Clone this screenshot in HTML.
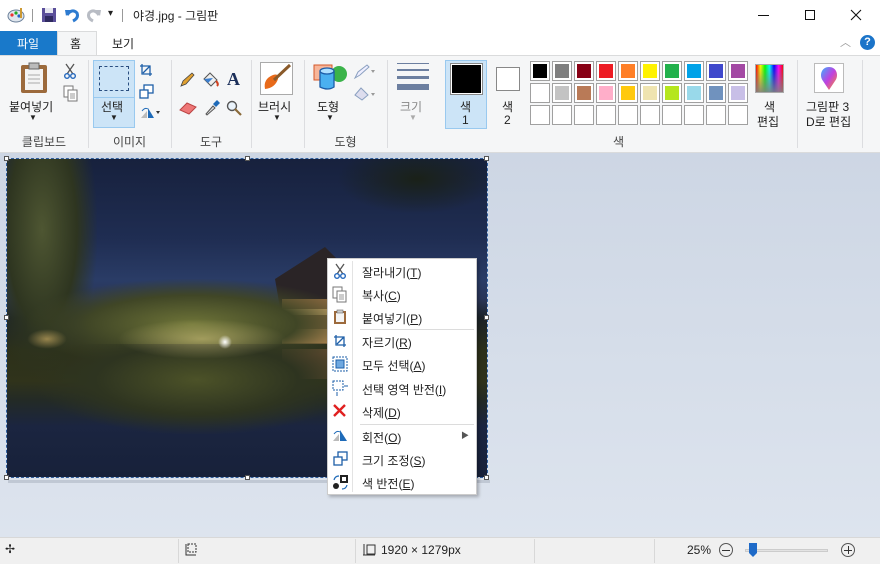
<!DOCTYPE html>
<html><head><meta charset="utf-8"><style>
*{margin:0;padding:0;box-sizing:border-box}
body{width:880px;height:564px;overflow:hidden;font-family:"Liberation Sans","Noto Sans CJK KR",sans-serif;font-size:12px;color:#222;background:#fff;position:relative}
.a{position:absolute}
.t{position:absolute;white-space:nowrap}
.sep{position:absolute;top:60px;width:1px;height:88px;background:#dcdde0}
.glab{position:absolute;top:133px;font-size:12px;color:#444;text-align:center}
.cell{position:absolute;width:20px;height:20px;border:1px solid #a0a0a0;background:#fff}
.cell i{position:absolute;left:2px;top:2px;width:14px;height:14px;display:block}
.mi{position:absolute;left:362px;font-size:12px;color:#222}
.ms{position:absolute;left:360px;width:114px;height:1px;background:#dcdcdc}
.h{position:absolute;width:5px;height:5px;background:#fff;border:1px solid #555}
</style></head><body>
<div class="a" style="left:0;top:0;width:880px;height:31px;background:#fff"></div>
<svg class="a" style="left:7px;top:7px" width="18" height="16"><ellipse cx="9" cy="9" rx="8" ry="6" fill="#dfe6ee" stroke="#6a7f99"/><circle cx="5" cy="8" r="1.6" fill="#e33"/><circle cx="9" cy="6" r="1.6" fill="#2a2"/><circle cx="12" cy="9" r="1.6" fill="#26c"/><rect x="13" y="1" width="2" height="10" fill="#c93"/></svg>
<div class="a" style="left:32px;top:9px;width:1px;height:13px;background:#999"></div>
<svg class="a" style="left:41px;top:7px" width="16" height="16"><rect x="1" y="1" width="14" height="14" fill="#5b4f9a"/><rect x="4" y="1" width="8" height="5" fill="#e6e6f0"/><rect x="4" y="9" width="8" height="6" fill="#2f2a60"/></svg>
<svg class="a" style="left:64px;top:7px" width="16" height="16"><path d="M3 8 Q8 1 13 6 Q15 11 9 14" fill="none" stroke="#2d7bd0" stroke-width="3"/><path d="M1 3 L7 3 L2 9Z" fill="#2d7bd0"/></svg>
<svg class="a" style="left:86px;top:7px" width="16" height="16"><path d="M13 8 Q8 1 3 6 Q1 11 7 14" fill="none" stroke="#b8bcc4" stroke-width="3"/><path d="M15 3 L9 3 L14 9Z" fill="#b8bcc4"/></svg>
<div class="t" style="left:108px;top:8px;font-size:10px">▾</div>
<div class="a" style="left:122px;top:9px;width:1px;height:13px;background:#999"></div>
<div class="t" style="left:133px;top:7px;font-size:12px">야경.jpg - 그림판</div>
<div class="a" style="left:758px;top:15px;width:11px;height:1px;background:#111"></div>
<div class="a" style="left:805px;top:10px;width:10px;height:10px;border:1px solid #111"></div>
<svg class="a" style="left:850px;top:9px" width="12" height="12"><path d="M1 1L11 11M11 1L1 11" stroke="#111" stroke-width="1.1"/></svg>
<div class="a" style="left:0;top:31px;width:57px;height:24px;background:#1979ca"></div>
<div class="t" style="left:17px;top:35px;color:#fff;font-size:12px">파일</div>
<div class="a" style="left:57px;top:31px;width:40px;height:25px;background:#f5f6f7;border:1px solid #dadbdc;border-bottom:none"></div>
<div class="t" style="left:70px;top:35px">홈</div>
<div class="t" style="left:112px;top:35px">보기</div>
<div class="t" style="left:840px;top:34px;color:#999;font-size:11px">︿</div>
<div class="a" style="left:860px;top:35px;width:15px;height:15px;border-radius:50%;background:#1b74c9;color:#fff;font-size:11px;font-weight:bold;text-align:center;line-height:15px">?</div>
<div class="a" style="left:0;top:55px;width:880px;height:98px;background:#f5f6f7;border-top:1px solid #dadbdc;border-bottom:1px solid #dadbdc"></div>
<div class="sep" style="left:88px"></div><div class="sep" style="left:171px"></div><div class="sep" style="left:251px"></div><div class="sep" style="left:304px"></div><div class="sep" style="left:387px"></div><div class="sep" style="left:797px"></div><div class="sep" style="left:862px"></div>
<svg class="a" style="left:20px;top:62px" width="28" height="32"><rect x="1" y="3" width="26" height="28" rx="2" fill="#9c6a3c"/><rect x="5" y="7" width="18" height="21" fill="#f4f4f4"/><rect x="9" y="1" width="10" height="6" fill="#bbb" stroke="#666"/><path d="M8 13h12M8 17h12M8 21h12" stroke="#aaa"/></svg>
<svg class="a" style="left:63px;top:63px" width="14" height="16"><path d="M3 1L10 11M11 1L4 11" stroke="#555" stroke-width="1.3"/><circle cx="4" cy="13" r="2.3" fill="none" stroke="#2266bb" stroke-width="1.4"/><circle cx="10" cy="13" r="2.3" fill="none" stroke="#2266bb" stroke-width="1.4"/></svg>
<svg class="a" style="left:63px;top:85px" width="16" height="17"><rect x="1" y="1" width="9" height="11" fill="#fff" stroke="#777"/><rect x="5" y="5" width="9" height="11" fill="#fff" stroke="#777"/><path d="M7 9h5M7 11h5M7 13h5" stroke="#999"/></svg>
<div class="t" style="left:9px;top:98px">붙여넣기</div>
<div class="t" style="left:29px;top:113px;font-size:8px">▼</div>
<div class="glab" style="left:0;width:88px">클립보드</div>
<div class="a" style="left:93px;top:60px;width:42px;height:68px;background:#cce4f7;border:1px solid #99c9ef"></div>
<div class="a" style="left:93px;top:97px;width:42px;height:1px;background:#99c9ef"></div>
<div class="a" style="left:99px;top:66px;width:30px;height:25px;border:1px dashed #2a4e80"></div>
<div class="t" style="left:101px;top:98px">선택</div>
<div class="t" style="left:110px;top:113px;font-size:8px">▼</div>
<svg class="a" style="left:139px;top:63px" width="14" height="14"><path d="M3 1v10h10M1 3h10v10M4 10l7-7" fill="none" stroke="#1e5fa8" stroke-width="1.3"/></svg>
<svg class="a" style="left:139px;top:84px" width="15" height="15"><rect x="5" y="1" width="9" height="8" fill="#fff" stroke="#1e5fa8" stroke-width="1.3"/><rect x="1" y="6" width="8" height="8" fill="#fff" stroke="#1e5fa8" stroke-width="1.3"/></svg>
<svg class="a" style="left:139px;top:106px" width="22" height="14"><path d="M2 12L8 5v7z" fill="#bbb"/><path d="M9 12V2l6 10z" fill="#1e6ab8"/><path d="M3 5q3-4 6-2" fill="none" stroke="#1e6ab8"/><path d="M17 5h4l-2 3z" fill="#333"/></svg>
<div class="glab" style="left:88px;width:83px">이미지</div>
<svg class="a" style="left:179px;top:72px" width="16" height="16"><path d="M2 14l2-5 9-8 2 2-8 9z" fill="#e0a030" stroke="#444" stroke-width=".8"/></svg>
<svg class="a" style="left:202px;top:71px" width="18" height="17"><path d="M2 8l6-6 7 7-6 6z" fill="#eee" stroke="#555"/><path d="M2 8l4 4 5-5" fill="#3a7fd0"/><path d="M14 10q3 3 1 5" stroke="#d04020" stroke-width="2" fill="none"/></svg>
<div class="t" style="left:227px;top:69px;font-size:18px;font-weight:bold;font-family:'Liberation Serif',serif;color:#1b2f5a">A</div>
<svg class="a" style="left:179px;top:101px" width="18" height="14"><path d="M1 9l7-7 9 4-7 7z" fill="#e77" stroke="#b44"/></svg>
<svg class="a" style="left:204px;top:99px" width="16" height="17"><path d="M2 15l7-8 2 2-8 7z" fill="#ddd" stroke="#555"/><path d="M9 5l4-4 3 3-4 4z" fill="#1e6ab8"/></svg>
<svg class="a" style="left:226px;top:100px" width="16" height="16"><circle cx="6" cy="6" r="4.5" fill="#eaf3fb" stroke="#555" stroke-width="1.4"/><path d="M9 9l6 6" stroke="#8a6a3a" stroke-width="2.2"/></svg>
<div class="glab" style="left:171px;width:80px">도구</div>
<svg class="a" style="left:260px;top:62px" width="34" height="33"><rect x=".5" y=".5" width="32" height="32" fill="#fff" stroke="#aaa"/><path d="M5 27q-2-10 8-14q6-2 5 4q-3 9-13 10z" fill="#e86a1a"/><path d="M14 18L30 3" stroke="#8a5a2a" stroke-width="3"/></svg>
<div class="t" style="left:258px;top:98px">브러시</div>
<div class="t" style="left:273px;top:113px;font-size:8px">▼</div>
<svg class="a" style="left:313px;top:62px" width="34" height="30"><rect x="1" y="3" width="18" height="15" fill="#f7b69a" stroke="#d4582a"/><circle cx="26" cy="12" r="8" fill="#3ab34a"/><path d="M7 9v16q8 4 14 0V9" fill="#4ab0f0" stroke="#1c5da8" stroke-width="1.3"/><ellipse cx="14" cy="9" rx="7" ry="3" fill="#aee0ff" stroke="#1c5da8" stroke-width="1.3"/></svg>
<svg class="a" style="left:353px;top:64px" width="24" height="16"><path d="M2 14l3-6 9-7 2 2-9 8z" fill="#eef" stroke="#8aa0c0"/><path d="M18 6h4l-2 3z" fill="#999"/></svg>
<svg class="a" style="left:353px;top:85px" width="24" height="16"><path d="M2 10l6-7 7 7-6 5z" fill="#dde" stroke="#8aa0c0"/><path d="M18 8h4l-2 3z" fill="#999"/></svg>
<div class="t" style="left:317px;top:98px">도형</div>
<div class="t" style="left:326px;top:113px;font-size:8px">▼</div>
<div class="glab" style="left:304px;width:83px">도형</div>
<div class="a" style="left:397px;top:63px;width:32px;height:1px;background:#6c7fa0"></div>
<div class="a" style="left:397px;top:69px;width:32px;height:2px;background:#6c7fa0"></div>
<div class="a" style="left:397px;top:76px;width:32px;height:3px;background:#6c7fa0"></div>
<div class="a" style="left:397px;top:84px;width:32px;height:6px;background:#6c7fa0"></div>
<div class="t" style="left:400px;top:98px;color:#888">크기</div>
<div class="t" style="left:409px;top:113px;font-size:8px;color:#aaa">▼</div>
<div class="a" style="left:445px;top:60px;width:42px;height:69px;background:#cce4f7;border:1px solid #99c9ef"></div>
<div class="a" style="left:450px;top:63px;width:33px;height:32px;border:1px solid #888;background:#fff"></div>
<div class="a" style="left:452px;top:65px;width:29px;height:28px;background:#000"></div>
<div class="t" style="left:460px;top:98px">색</div><div class="t" style="left:462px;top:113px">1</div>
<div class="a" style="left:496px;top:67px;width:24px;height:24px;border:1px solid #888;background:#fff"></div>
<div class="t" style="left:502px;top:98px">색</div><div class="t" style="left:504px;top:113px">2</div>
<div class="cell" style="left:530px;top:61px"><i style="background:#000"></i></div>
<div class="cell" style="left:552px;top:61px"><i style="background:#7f7f7f"></i></div>
<div class="cell" style="left:574px;top:61px"><i style="background:#880015"></i></div>
<div class="cell" style="left:596px;top:61px"><i style="background:#ed1c24"></i></div>
<div class="cell" style="left:618px;top:61px"><i style="background:#ff7f27"></i></div>
<div class="cell" style="left:640px;top:61px"><i style="background:#fff200"></i></div>
<div class="cell" style="left:662px;top:61px"><i style="background:#22b14c"></i></div>
<div class="cell" style="left:684px;top:61px"><i style="background:#00a2e8"></i></div>
<div class="cell" style="left:706px;top:61px"><i style="background:#3f48cc"></i></div>
<div class="cell" style="left:728px;top:61px"><i style="background:#a349a4"></i></div>
<div class="cell" style="left:530px;top:83px"><i style="background:#fff"></i></div>
<div class="cell" style="left:552px;top:83px"><i style="background:#c3c3c3"></i></div>
<div class="cell" style="left:574px;top:83px"><i style="background:#b97a57"></i></div>
<div class="cell" style="left:596px;top:83px"><i style="background:#ffaec9"></i></div>
<div class="cell" style="left:618px;top:83px"><i style="background:#ffc90e"></i></div>
<div class="cell" style="left:640px;top:83px"><i style="background:#efe4b0"></i></div>
<div class="cell" style="left:662px;top:83px"><i style="background:#b5e61d"></i></div>
<div class="cell" style="left:684px;top:83px"><i style="background:#99d9ea"></i></div>
<div class="cell" style="left:706px;top:83px"><i style="background:#7092be"></i></div>
<div class="cell" style="left:728px;top:83px"><i style="background:#c8bfe7"></i></div>
<div class="cell" style="left:530px;top:105px"></div><div class="cell" style="left:552px;top:105px"></div><div class="cell" style="left:574px;top:105px"></div><div class="cell" style="left:596px;top:105px"></div><div class="cell" style="left:618px;top:105px"></div><div class="cell" style="left:640px;top:105px"></div><div class="cell" style="left:662px;top:105px"></div><div class="cell" style="left:684px;top:105px"></div><div class="cell" style="left:706px;top:105px"></div><div class="cell" style="left:728px;top:105px"></div>
<div class="a" style="left:755px;top:64px;width:29px;height:29px;border:1px solid #aaa;background:linear-gradient(to bottom,rgba(255,255,255,0),rgba(128,128,128,.9)),linear-gradient(to right,#f00,#ff0,#0f0,#0ff,#00f,#f0f,#f00)"></div>
<div class="t" style="left:764px;top:98px">색</div><div class="t" style="left:757px;top:113px">편집</div>
<div class="glab" style="left:440px;width:357px">색</div>
<div class="a" style="left:814px;top:63px;width:30px;height:30px;border:1px solid #bbb;background:#fff"></div>
<svg class="a" style="left:818px;top:66px" width="22" height="25"><defs><linearGradient id="g" x1="0" y1="0" x2="1" y2="1"><stop offset="0" stop-color="#3ab0ff"/><stop offset=".5" stop-color="#c040e0"/><stop offset="1" stop-color="#ff9020"/></linearGradient></defs><path d="M11 1C3 1 1 10 5 15l6 9 6-9c4-5 2-14-6-14z" fill="url(#g)"/></svg>
<div class="t" style="left:806px;top:98px">그림판 3</div><div class="t" style="left:806px;top:113px">D로 편집</div>
<div class="a" style="left:0;top:153px;width:880px;height:384px;background:linear-gradient(#cdd6e4,#dde4ee)"></div>
<div class="a" style="left:8px;top:480px;width:482px;height:3px;background:#c0c8d4"></div>
<!-- photo -->
<div class="a" style="left:7px;top:159px;width:480px;height:318px;overflow:hidden;background:linear-gradient(#17213d 0%,#1f2d52 25%,#2a3c66 38%,#2a3658 44%,#1b2228 50%,#2c301a 60%,#30331b 70%,#232a26 76%,#1b2540 84%,#17213a 100%)">
 <div class="a" style="left:-10px;top:-10px;width:100px;height:230px;background:radial-gradient(ellipse at 45% 35%,#4e5632 0%,#2e3520 45%,rgba(20,30,40,0) 72%)"></div>
 <div class="a" style="left:330px;top:-15px;width:160px;height:70px;background:radial-gradient(ellipse,#1a2118 0%,rgba(20,30,40,0) 70%)"></div>
 <svg class="a" style="left:0;top:0" width="480" height="318">
  <path d="M268 120 L318 88 L330 100 L330 160 L275 160Z" fill="#2a2426"/>
  <rect x="275" y="140" width="55" height="45" fill="#8a6840"/>
  <rect x="275" y="150" width="55" height="6" fill="#d8b070"/>
  <rect x="275" y="170" width="55" height="14" fill="#c09058"/>
  <rect x="275" y="190" width="55" height="30" fill="#6a5034" opacity=".8"/>
 </svg>
 <div class="a" style="left:20px;top:120px;width:300px;height:90px;background:radial-gradient(ellipse at 55% 50%,#6e7438 0%,#404626 45%,rgba(30,40,30,0) 72%)"></div>
 <div class="a" style="left:30px;top:185px;width:320px;height:90px;background:radial-gradient(ellipse at 50% 40%,#4c5228 0%,#2e3420 45%,rgba(30,40,50,0) 72%)"></div>
 <div class="a" style="left:110px;top:160px;width:170px;height:40px;background:radial-gradient(ellipse,rgba(255,235,150,.45),rgba(255,230,140,0) 70%)"></div>
 <div class="a" style="left:211px;top:176px;width:14px;height:14px;border-radius:50%;background:radial-gradient(#fff,rgba(255,240,180,0) 70%)"></div>
 <div class="a" style="left:20px;top:170px;width:40px;height:20px;background:radial-gradient(ellipse,rgba(255,210,120,.5),rgba(255,210,120,0) 70%)"></div>
</div>
<div class="a" style="left:6px;top:158px;width:482px;height:320px;border:1px dashed #3060a0"></div>
<div class="h" style="left:4px;top:156px"></div><div class="h" style="left:245px;top:156px"></div><div class="h" style="left:484px;top:156px"></div>
<div class="h" style="left:4px;top:315px"></div><div class="h" style="left:484px;top:315px"></div>
<div class="h" style="left:4px;top:475px"></div><div class="h" style="left:245px;top:475px"></div><div class="h" style="left:484px;top:475px"></div>
<div class="a" style="left:327px;top:258px;width:150px;height:237px;background:#fff;border:1px solid #ccc;box-shadow:2px 2px 3px rgba(0,0,0,.25)"></div>
<div class="a" style="left:352px;top:261px;width:1px;height:231px;background:#e3e3e3"></div>
<div class="ms" style="top:329px"></div><div class="ms" style="top:424px"></div>
<svg class="a" style="left:333px;top:263px" width="14" height="16"><path d="M3 1L10 11M11 1L4 11" stroke="#555" stroke-width="1.3"/><circle cx="4" cy="13" r="2.3" fill="none" stroke="#2266bb" stroke-width="1.4"/><circle cx="10" cy="13" r="2.3" fill="none" stroke="#2266bb" stroke-width="1.4"/></svg>
<svg class="a" style="left:332px;top:286px" width="16" height="17"><rect x="1" y="1" width="9" height="11" fill="#fff" stroke="#777"/><rect x="5" y="5" width="9" height="11" fill="#fff" stroke="#777"/><path d="M7 9h5M7 11h5M7 13h5" stroke="#999"/></svg>
<svg class="a" style="left:333px;top:309px" width="14" height="16"><rect x="1" y="2" width="12" height="13" fill="#9c6a3c"/><rect x="3" y="4" width="8" height="9" fill="#f4f4f4"/><rect x="4" y="1" width="6" height="3" fill="#ccc" stroke="#666" stroke-width=".6"/></svg>
<svg class="a" style="left:333px;top:334px" width="14" height="14"><path d="M3 1v10h10M1 3h10v10M4 10l7-7" fill="none" stroke="#1e5fa8" stroke-width="1.3"/></svg>
<svg class="a" style="left:332px;top:356px" width="16" height="16"><rect x="1" y="1" width="14" height="14" fill="none" stroke="#1e5fa8" stroke-dasharray="2 1"/><rect x="4" y="4" width="8" height="8" fill="#6fa8e0" stroke="#1e5fa8"/></svg>
<svg class="a" style="left:332px;top:380px" width="17" height="17"><rect x="1" y="1" width="10" height="9" fill="none" stroke="#1e5fa8" stroke-dasharray="2 1"/><path d="M12 6h4M5 12v4" stroke="#1e5fa8"/></svg>
<svg class="a" style="left:332px;top:403px" width="15" height="15"><path d="M2 2L13 13M13 2L2 13" stroke="#e02020" stroke-width="2.4"/></svg>
<svg class="a" style="left:332px;top:428px" width="16" height="14"><path d="M1 13L7 6v7z" fill="#bbb"/><path d="M8 13V2l7 11z" fill="#1e6ab8"/><path d="M2 6q3-4 6-2" fill="none" stroke="#1e6ab8"/></svg>
<svg class="a" style="left:333px;top:451px" width="15" height="15"><rect x="5" y="1" width="9" height="8" fill="#fff" stroke="#1e5fa8" stroke-width="1.3"/><rect x="1" y="6" width="8" height="8" fill="#fff" stroke="#1e5fa8" stroke-width="1.3"/></svg>
<svg class="a" style="left:332px;top:474px" width="17" height="17"><rect x="8" y="1" width="8" height="8" fill="#222"/><rect x="10" y="3" width="4" height="4" fill="#fff"/><circle cx="4" cy="12" r="3" fill="#222"/><path d="M2 6q1-4 5-4M15 11q-1 4-5 4" fill="none" stroke="#1e6ab8" stroke-width="1.2"/></svg>
<div class="mi" style="top:264px">잘라내기(<u>T</u>)</div>
<div class="mi" style="top:287px">복사(<u>C</u>)</div>
<div class="mi" style="top:310px">붙여넣기(<u>P</u>)</div>
<div class="mi" style="top:334px">자르기(<u>R</u>)</div>
<div class="mi" style="top:357px">모두 선택(<u>A</u>)</div>
<div class="mi" style="top:381px">선택 영역 반전(<u>I</u>)</div>
<div class="mi" style="top:404px">삭제(<u>D</u>)</div>
<div class="mi" style="top:429px">회전(<u>O</u>)</div>
<div class="t" style="left:461px;top:430px;font-size:8px;color:#555">▶</div>
<div class="mi" style="top:452px">크기 조정(<u>S</u>)</div>
<div class="mi" style="top:475px">색 반전(<u>E</u>)</div>
<div class="a" style="left:0;top:537px;width:880px;height:27px;background:#f0f0f0;border-top:1px solid #d8d8d8"></div>
<div class="a" style="left:178px;top:539px;width:1px;height:24px;background:#d8d8d8"></div>
<div class="a" style="left:355px;top:539px;width:1px;height:24px;background:#d8d8d8"></div>
<div class="a" style="left:534px;top:539px;width:1px;height:24px;background:#d8d8d8"></div>
<div class="a" style="left:654px;top:539px;width:1px;height:24px;background:#d8d8d8"></div>
<div class="t" style="left:5px;top:542px;font-size:12px">✢</div>
<svg class="a" style="left:184px;top:543px" width="14" height="13"><rect x="4" y="1" width="8" height="8" fill="none" stroke="#333" stroke-dasharray="2 1"/><path d="M2 1v11h10" fill="none" stroke="#333"/></svg>
<svg class="a" style="left:362px;top:543px" width="14" height="13"><rect x="5" y="2" width="8" height="9" fill="none" stroke="#333"/><path d="M2 1v11" stroke="#333"/><path d="M1 12h12" stroke="#333"/></svg>
<div class="t" style="left:381px;top:543px;font-size:12px">1920 × 1279px</div>
<div class="t" style="left:687px;top:543px;font-size:12px">25%</div>
<div class="a" style="left:719px;top:543px;width:14px;height:14px;border:1px solid #555;border-radius:50%"></div>
<div class="a" style="left:722px;top:550px;width:8px;height:1px;background:#333"></div>
<div class="a" style="left:745px;top:549px;width:83px;height:3px;background:#e3e3e3;border:1px solid #ccc"></div>
<svg class="a" style="left:748px;top:542px" width="10" height="16"><path d="M1 1h8v10l-4 4-4-4z" fill="#1e6ac8"/></svg>
<div class="a" style="left:841px;top:543px;width:14px;height:14px;border:1px solid #555;border-radius:50%"></div>
<div class="a" style="left:844px;top:550px;width:8px;height:1px;background:#333"></div>
<div class="a" style="left:848px;top:546px;width:1px;height:8px;background:#333"></div>
</body></html>
